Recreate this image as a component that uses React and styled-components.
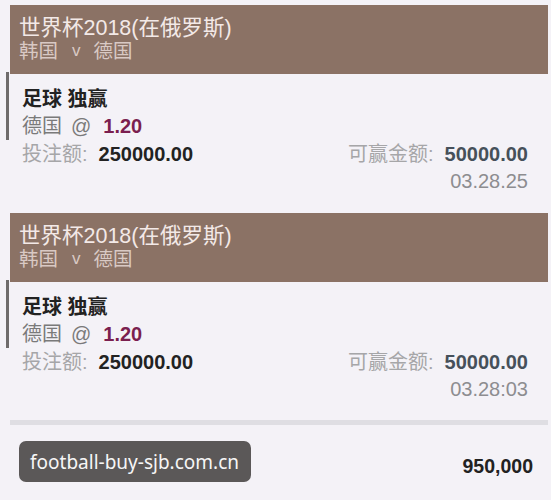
import React from "react";
import styled, { createGlobalStyle } from "styled-components";

const Global = createGlobalStyle`
  html, body { margin: 0; padding: 0; background: #f4f2f7; }
  body { font-family: "Liberation Sans", "Noto Sans CJK SC", sans-serif; }
`;

const Page = styled.div`
  width: 551px;
  height: 500px;
  box-sizing: border-box;
  padding: 5px 3px 0 10px;
  overflow: hidden;
  background: #f4f2f7;
`;

const Card = styled.section`
  margin-bottom: 18px;
`;

const Header = styled.header`
  height: 69px;
  box-sizing: border-box;
  padding: 11px 0 0 9px;
  background: #8b7265;
`;

const Title = styled.div`
  font-size: 21.5px;
  line-height: 24px;
  color: #f3e9e7;
`;

const Sub = styled.div`
  font-size: 19.5px;
  line-height: 22px;
  color: #d9c9c4;
  display: flex;
  align-items: center;
`;

const Vs = styled.span`
  padding: 0 13px 0 14px;
  font-size: 17px;
`;

const Picks = styled.div`
  margin: -2px 0 0 -4px;
  border-left: 3px solid #6e6b6b;
  padding: 14px 0 0 13px;
`;

const Line = styled.div`
  font-size: 20px;
  line-height: 27px;
  color: ${(p) => p.$color || "#7a7a7a"};
  font-weight: ${(p) => (p.$bold ? 700 : 400)};
`;

const Odds = styled.span`
  color: #7b1f4f;
  font-weight: 700;
  margin-left: 12px;
`;

const At = styled.span`
  margin-left: 9px;
`;

const AmountRow = styled.div`
  margin-top: 1px;
  padding: 0 20px 0 12px;
  display: flex;
  justify-content: space-between;
  font-size: 20px;
  line-height: 27px;
`;

const Label = styled.span`
  color: #a6a6a8;
  margin-right: 11px;
`;

const Value = styled.span`
  font-weight: 700;
  color: ${(p) => p.$color || "#222"};
`;

const DateRow = styled.div`
  padding-right: 20px;
  text-align: right;
  font-size: 20px;
  line-height: 27px;
  color: #8d8d90;
`;

const Divider = styled.div`
  height: 5px;
  margin-top: -1px;
  background: #dfdee3;
`;

const Footer = styled.div`
  display: flex;
  justify-content: space-between;
  align-items: center;
  padding: 16px 15px 0 9px;
`;

const Watermark = styled.div`
  height: 41px;
  box-sizing: border-box;
  padding: 0 12px 0 11px;
  display: flex;
  align-items: center;
  border-radius: 7px;
  background: #5b5858;
  color: #f6f6f6;
  font-family: "Noto Sans", sans-serif;
  font-size: 19px;
`;

const Total = styled.div`
  font-size: 19.5px;
  font-weight: 700;
  color: #222;
  margin-top: 9px;
`;

const bets = [
  { time: "03.28.25" },
  { time: "03.28:03" },
];

export default function App() {
  return (
    <Page>
      <Global />
      {bets.map((b, i) => (
        <Card key={i}>
          <Header>
            <Title>世界杯2018(在俄罗斯)</Title>
            <Sub>
              韩国<Vs>v</Vs>德国
            </Sub>
          </Header>
          <Picks>
            <Line $bold $color="#222">足球 独赢</Line>
            <Line>
              德国<At>@</At>
              <Odds>1.20</Odds>
            </Line>
          </Picks>
          <AmountRow>
            <span>
              <Label>投注额:</Label>
              <Value>250000.00</Value>
            </span>
            <span>
              <Label>可赢金额:</Label>
              <Value $color="#46505a">50000.00</Value>
            </span>
          </AmountRow>
          <DateRow>{b.time}</DateRow>
        </Card>
      ))}
      <Divider />
      <Footer>
        <Watermark>football-buy-sjb.com.cn</Watermark>
        <Total>950,000</Total>
      </Footer>
    </Page>
  );
}
